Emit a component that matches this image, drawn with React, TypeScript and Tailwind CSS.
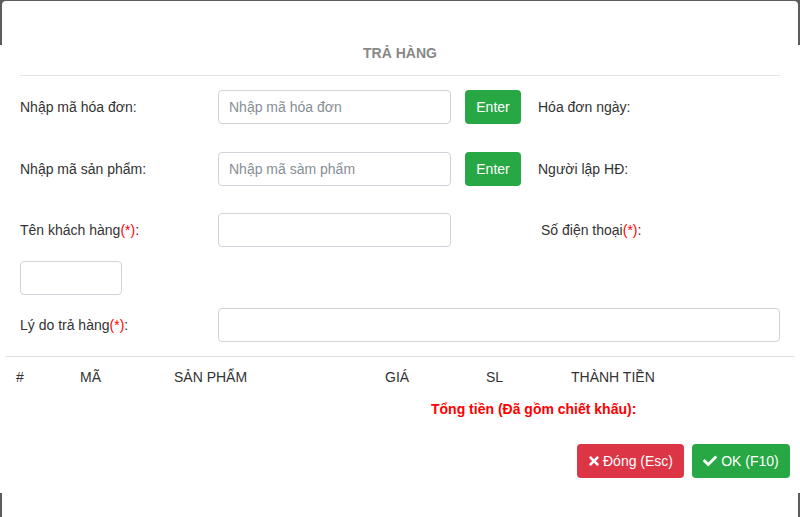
import { FaTimes, FaCheck } from "react-icons/fa";

function Req() {
    return <span className="text-[#ff0000]">(*)</span>;
}

const inputCls =
    "h-[34px] border border-[#ced4da] rounded-[4px] px-[10px] text-[14px] text-[#495057] placeholder:text-[#868e96] outline-none bg-white";

export default function App() {
    return (
        <div className="h-[517px] bg-[linear-gradient(to_bottom,#5c5c5c_45px,#ffffff_45px,#ffffff_493px,#5c5c5c_493px)] pt-px px-[2px] overflow-hidden">
            <div className="h-[530px] bg-white rounded-[4px] font-['Liberation_Sans',Arial,sans-serif] text-[14px] leading-[20px] text-[#333]">
                <div className="pt-[42px] h-[62px] text-center font-bold text-[#888]">TRẢ HÀNG</div>
                <div className="mt-[12px] mx-[18px] border-t border-[#e5e5e5]" />

                <div className="px-[18px]">
                    <div className="mt-[14px] flex items-center">
                        <div className="w-[198px]">Nhập mã hóa đơn:</div>
                        <input className={inputCls + " w-[233px]"} placeholder="Nhập mã hóa đơn" />
                        <button className="ml-[14px] w-[56px] h-[34px] rounded-[4px] bg-[#28a745] text-white">Enter</button>
                        <div className="ml-[17px]">Hóa đơn ngày:</div>
                    </div>

                    <div className="mt-[28px] flex items-center">
                        <div className="w-[198px]">Nhập mã sản phẩm:</div>
                        <input className={inputCls + " w-[233px]"} placeholder="Nhập mã sàm phẩm" />
                        <button className="ml-[14px] w-[56px] h-[34px] rounded-[4px] bg-[#28a745] text-white">Enter</button>
                        <div className="ml-[17px]">Người lập HĐ:</div>
                    </div>

                    <div className="mt-[27px] flex items-center">
                        <div className="w-[198px]">Tên khách hàng<Req />:</div>
                        <input className={inputCls + " w-[233px]"} />
                        <div className="ml-[90px]">Số điện thoại<Req />:</div>
                    </div>

                    <div className="mt-[14px]">
                        <input className={inputCls + " w-[102px] block"} />
                    </div>

                    <div className="mt-[13px] flex items-center">
                        <div className="w-[198px]">Lý do trả hàng<Req />:</div>
                        <input className={inputCls + " flex-1"} />
                    </div>
                </div>

                <div className="mt-[14px] mx-[3px] border-t border-[#dee2e6]" />

                <div className="mt-[10px] flex pl-[14px]">
                    <div className="w-[64px]">#</div>
                    <div className="w-[94px]">MÃ</div>
                    <div className="w-[211px]">SẢN PHẨM</div>
                    <div className="w-[101px]">GIÁ</div>
                    <div className="w-[85px]">SL</div>
                    <div>THÀNH TIỀN</div>
                </div>

                <div className="mt-[12px] pl-[429px] font-bold text-[#ff0000]">Tổng tiền (Đã gồm chiết khấu):</div>

                <div className="mt-[25px] flex justify-end gap-[8px] pr-[8px]">
                    <button className="h-[34px] w-[107px] rounded-[4px] bg-[#dc3545] text-white flex items-center justify-center gap-[3px]">
                        <FaTimes className="w-[12px] h-[14px]" />
                        Đóng (Esc)
                    </button>
                    <button className="h-[34px] w-[98px] rounded-[4px] bg-[#28a745] text-white flex items-center justify-center gap-[4px]">
                        <FaCheck className="w-[14px] h-[14px]" />
                        OK (F10)
                    </button>
                </div>
            </div>
        </div>
    );
}
